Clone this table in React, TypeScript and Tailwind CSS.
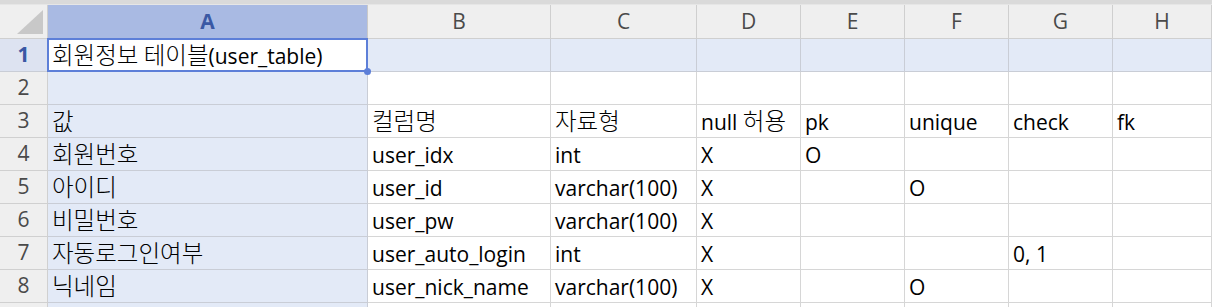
import React from "react";

const COLS = ["A", "B", "C", "D", "E", "F", "G", "H"];

const ROWS: string[][] = [
  ["회원정보 테이블(user_table)", "", "", "", "", "", "", ""],
  ["", "", "", "", "", "", "", ""],
  ["값", "컬럼명", "자료형", "null 허용", "pk", "unique", "check", "fk"],
  ["회원번호", "user_idx", "int", "X", "O", "", "", ""],
  ["아이디", "user_id", "varchar(100)", "X", "", "O", "", ""],
  ["비밀번호", "user_pw", "varchar(100)", "X", "", "", "", ""],
  ["자동로그인여부", "user_auto_login", "int", "X", "", "", "0, 1", ""],
  ["닉네임", "user_nick_name", "varchar(100)", "X", "", "O", "", ""],
];

const font = {
  fontFamily: '"Open Sans", "Noto Sans CJK KR", sans-serif',
};

function Txt({ v }: { v: string }) {
  const parts = v.split(/([\uAC00-\uD7A3]+(?:\s+[\uAC00-\uD7A3]+)*)/);
  return (
    <>
      {parts.map((p, i) =>
        /[\uAC00-\uD7A3]/.test(p) ? (
          <span key={i} className="text-[23.5px] font-light" style={{ fontFamily: '"Noto Sans CJK KR", sans-serif' }}>
            {p}
          </span>
        ) : (
          <span key={i}>{p}</span>
        )
      )}
    </>
  );
}

export default function App() {
  return (
    <div
      className="w-[1212px] h-[307px] overflow-hidden bg-white text-[21px] text-black"
      style={font}
    >
      <div className="h-[5px] bg-[#dadada] border-b border-[#e6e6e6]" />
      <div className="grid grid-cols-[48px_320px_183px_146px_104px_104px_104px_104px_1fr]">
        {/* corner */}
        <div className="h-[34px] bg-[#efefef] border-r border-b border-[#cfcfcf] flex items-end justify-end p-[4px]">
          <svg width="26" height="24" viewBox="0 0 26 24">
            <polygon points="26,0 26,24 0,24" fill="#c8c8c8" />
          </svg>
        </div>
        {COLS.map((c) =>
          c === "A" ? (
            <div
              key={c}
              className="h-[34px] bg-[#a9bae3] border-r border-b border-[#c9c9c9] flex items-center justify-center font-bold text-[#3a58a4] leading-none pb-[1px]"
            >
              {c}
            </div>
          ) : (
            <div
              key={c}
              className="h-[34px] bg-[#efefef] border-r border-b border-[#cfcfcf] flex items-center justify-center text-[#4a4a4a] leading-none pb-[1px]"
            >
              {c}
            </div>
          )
        )}
        {ROWS.map((row, ri) => (
          <React.Fragment key={ri}>
            {ri === 0 ? (
              <div className="h-[33px] bg-[#dde3f1] border-r border-b border-[#c9cdd6] flex items-center justify-center font-bold text-[#3a58a4] leading-none pb-[2px]">
                {ri + 1}
              </div>
            ) : (
              <div className="h-[33px] bg-[#efefef] border-r border-b border-[#d0d0d0] flex items-center justify-center text-[#4a4a4a] leading-none pb-[2px]">
                {ri + 1}
              </div>
            )}
            {row.map((v, ci) => {
              if (ri === 0 && ci === 0) {
                return (
                  <div
                    key={ci}
                    className="relative h-[33px] bg-white border-r border-b border-[#c9cdd6] flex items-end px-[4px] pb-[3px] leading-[24px] whitespace-nowrap"
                  >
                    <div>
                      <Txt v={v} />
                    </div>
                    <div className="absolute left-[-1px] top-[-1px] right-[-1px] bottom-[-1px] border-2 border-[#5d7fd8] pointer-events-none" />
                    <div className="absolute right-[-4px] bottom-[-4px] w-[7px] h-[7px] rounded-full bg-[#5d7fd8]" />
                  </div>
                );
              }
              const colA = ci === 0;
              const row1 = ri === 0;
              const cls = colA
                ? "bg-[#e3eaf7] border-[#c9cdd6]"
                : row1
                ? "bg-[#e3eaf7] border-[#c9cdd6]"
                : "bg-white border-[#d6d6d6]";
              return (
                <div
                  key={ci}
                  className={`h-[33px] border-r border-b ${cls} flex items-end px-[4px] pb-[3px] leading-[24px] whitespace-nowrap overflow-visible`}
                >
                  <div>
                    <Txt v={v} />
                  </div>
                </div>
              );
            })}
          </React.Fragment>
        ))}
        {/* partially visible row 9 */}
        <div className="h-[33px] bg-[#efefef] border-r border-b border-[#d0d0d0]" />
        <div className="h-[33px] bg-[#e3eaf7] border-r border-b border-[#c9cdd6]" />
        {COLS.slice(1).map((c) => (
          <div key={c} className="h-[33px] bg-white border-r border-b border-[#d6d6d6]" />
        ))}
      </div>
    </div>
  );
}
